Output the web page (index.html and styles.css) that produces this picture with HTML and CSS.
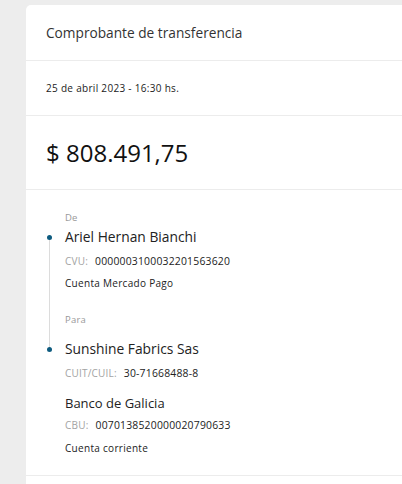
FILE: index.html
```html
<!DOCTYPE html>
<html lang="es">
<head>
<meta charset="utf-8">
<title>Comprobante de transferencia</title>
<link rel="stylesheet" href="styles.css">
</head>
<body>
<div class="card">
  <div class="section header">Comprobante de transferencia</div>
  <div class="section date">25 de abril 2023 - 16:30 hs.</div>
  <div class="section amount">$ 808.491,75</div>
  <div class="section parties">
    <div class="timeline">
      <div class="label">De</div>
      <div class="name name-from">Ariel Hernan Bianchi</div>
      <div class="field f-cvu"><span class="key">CVU:</span><span class="val">0000003100032201563620</span></div>
      <div class="note n-mp">Cuenta Mercado Pago</div>
      <div class="label l-para">Para</div>
      <div class="name name-to">Sunshine Fabrics Sas</div>
    </div>
    <div class="field f-cuit"><span class="key">CUIT/CUIL:</span><span class="val">30-71668488-8</span></div>
    <div class="bank">Banco de Galicia</div>
    <div class="field f-cbu"><span class="key">CBU:</span><span class="val">0070138520000020790633</span></div>
    <div class="note n-cc">Cuenta corriente</div>
  </div>
</div>
</body>
</html>
```
FILE: styles.css
```css
html, body {
  margin: 0;
  padding: 0;
}
body {
  background: #ededed;
  font-family: "Open Sans", "Liberation Sans", sans-serif;
  color: #222;
  padding: 5px 0 0 26px;
  height: 484px;
  box-sizing: border-box;
  overflow: hidden;
}
.card {
  background: #fff;
  border-top-left-radius: 5px;
  min-height: 479px;
}
.section {
  border-bottom: 1px solid #ececec;
  padding: 0 20px;
}
.header {
  height: 55px;
  display: flex;
  align-items: center;
  font-size: 13.7px;
  color: #333;
}
.date {
  height: 54px;
  display: flex;
  align-items: center;
  font-size: 10px;
  letter-spacing: 0.3px;
  color: #222;
}
.amount {
  height: 74px;
  display: flex;
  align-items: center;
  font-size: 24px;
  color: #111;
  box-sizing: border-box;
}
.parties {
  padding: 22px 20px 19px 39px;
}
.timeline {
  position: relative;
}
.timeline::before {
  content: "";
  position: absolute;
  left: -16px;
  top: 25px;
  height: 112px;
  width: 1px;
  background: #dcdcdc;
}
.label {
  font-size: 9.5px;
  line-height: 12px;
  color: #999;
  letter-spacing: 0.2px;
}
.l-para { margin-top: 23px; }
.name, .bank {
  font-size: 13.8px;
  line-height: 20px;
  color: #222;
  position: relative;
}
.bank { font-size: 13px; }
.name-from { margin-top: 3px; }
.name-to { margin-top: 13px; }
.name::before {
  content: "";
  position: absolute;
  left: -18.5px;
  top: 8px;
  width: 5px;
  height: 5px;
  border-radius: 50%;
  background: #0d5b7f;
}
.field {
  font-size: 10px;
  line-height: 16px;
  display: flex;
  gap: 7px;
  letter-spacing: 0.2px;
}
.key { color: #a3a3a3; }
.val { color: #222; font-size: 10.4px; }
.note {
  font-size: 10px;
  line-height: 16px;
  letter-spacing: 0.3px;
  color: #222;
}
.f-cvu { margin-top: 6px; }
.n-mp { margin-top: 6px; }
.f-cuit { margin-top: 6px; }
.bank { margin-top: 12px; }
.f-cbu { margin-top: 4px; }
.n-cc { margin-top: 7px; }
```
